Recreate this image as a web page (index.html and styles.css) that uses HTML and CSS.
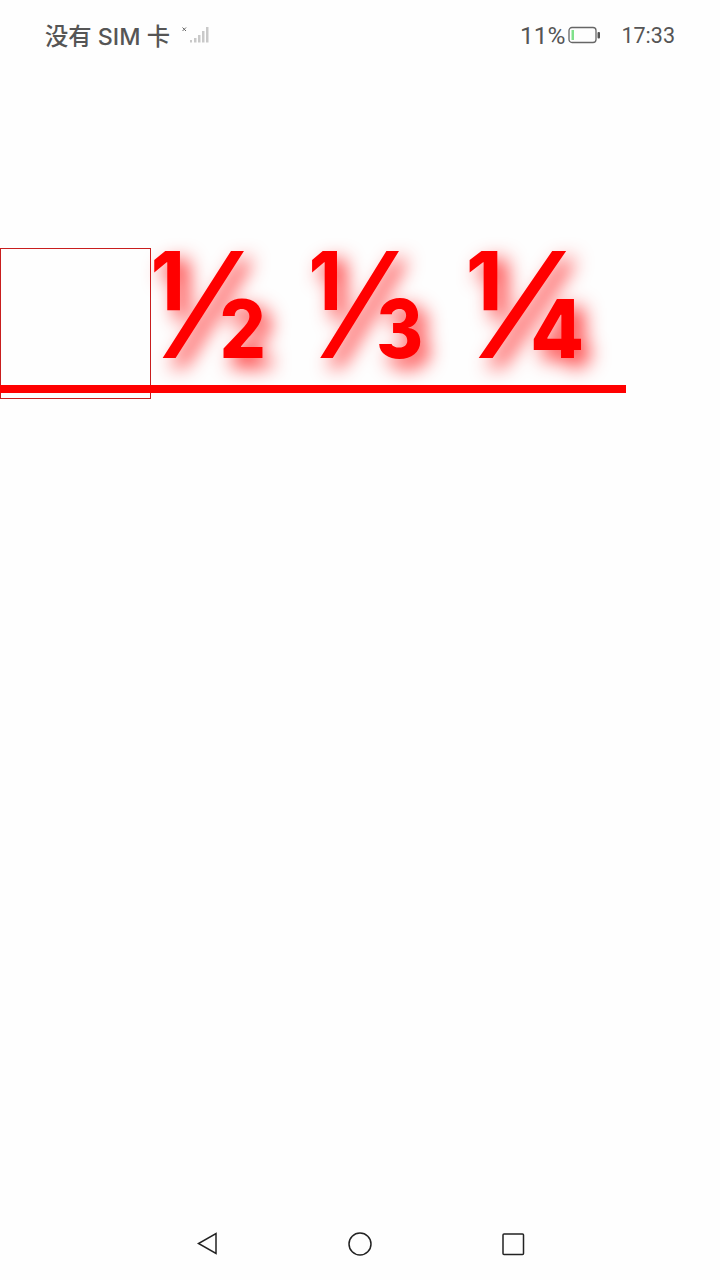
FILE: index.html
```html
<!DOCTYPE html>
<html lang="zh">
<head>
<meta charset="utf-8">
<title>Fractions</title>
<link rel="stylesheet" href="styles.css">
</head>
<body>
<div class="screen">
  <header class="status">
    <div class="status-left">
      <span class="carrier">没有 SIM 卡</span>
      <svg class="signal" width="28" height="20" viewBox="0 0 28 20">
        <path class="x" d="M0.500 2.500l3.500 3.500M4 2.500l-3.500 3.500"/>
        <g class="bars">
          <rect x="8" y="15" width="2" height="2.500"/>
          <rect x="12" y="13" width="2.500" height="4.500"/>
          <rect x="16" y="10" width="2.500" height="7.500"/>
          <rect x="20" y="6" width="2.500" height="11.500"/>
          <rect x="24" y="2" width="2.500" height="15.500"/>
        </g>
      </svg>
    </div>
    <div class="status-right">
      <span class="percent">11%</span>
      <svg class="battery" width="32" height="18" viewBox="0 0 32 18">
        <rect class="shell" x="1" y="1.500" width="27" height="15" rx="3"/>
        <rect class="charge" x="3.500" y="4" width="2.500" height="10"/>
        <rect class="cap" x="29.500" y="6" width="2.500" height="6.500" rx="1"/>
      </svg>
      <span class="clock">17:33</span>
    </div>
  </header>
  <main class="content">
    <div class="fractions">
      <div class="box"></div>
      <div class="glyphs">
        <span class="frac half">½</span>
        <span class="frac third">⅓</span>
        <span class="frac quarter">¼</span>
      </div>
    </div>
  </main>
  <nav class="nav">
    <svg width="24" height="26" viewBox="0 0 24 26"><path class="nav-icon" d="M21 2.500v20L3.500 12.500z"/></svg>
    <svg width="26" height="26" viewBox="0 0 26 26"><circle class="nav-icon" cx="13" cy="13" r="11"/></svg>
    <svg width="24" height="24" viewBox="0 0 24 24"><rect class="nav-icon" x="2" y="2" width="20.500" height="20.500" rx="1"/></svg>
  </nav>
</div>
</body>
</html>
```
FILE: styles.css
```css
* { box-sizing: border-box; }
html, body { margin: 0; padding: 0; }
body { background: #fefefe; }
.screen {
  width: 720px;
  height: 1280px;
  display: flex;
  flex-direction: column;
  overflow: hidden;
}
.status {
  height: 70px;
  flex: none;
  display: flex;
  justify-content: space-between;
  align-items: center;
  padding: 0 45px;
  color: #555;
  font-family: "Roboto", "Noto Sans CJK SC", sans-serif;
}
.status-left, .status-right { display: flex; align-items: center; }
.carrier {
  font-family: "Inter", "Noto Sans CJK SC", sans-serif;
  font-size: 23.300px;
  font-weight: 500;
}
.signal { margin-left: 12px; }
.x { stroke: #666; stroke-width: 1; fill: none; }
.bars { fill: #c9c9c9; }
.percent { font-size: 24.500px; }
.battery { margin-left: 3px; }
.shell { fill: none; stroke: #666; stroke-width: 1.300; }
.charge { fill: #7fe08a; }
.cap { fill: #555; }
.clock { font-size: 21.500px; margin-left: 21px; }
.content { flex: 1; padding-top: 178px; }
.fractions {
  position: relative;
  width: 626px;
  display: flex;
  align-items: flex-start;
  color: #f00;
}
.fractions::after {
  content: "";
  position: absolute;
  left: 0;
  right: 0;
  top: 137px;
  height: 8px;
  background: #f00;
}
.box {
  width: 151px;
  height: 151px;
  flex: none;
  border: 1px solid #c81e1e;
}
.glyphs {
  display: flex;
  margin-left: -2px;
  font-family: "Inter", "Roboto", sans-serif;
  font-size: 147px;
  font-weight: 600;
  line-height: 114px;
  white-space: nowrap;
  text-shadow: 9px 9px 20px rgba(255, 0, 0, 0.85);
}
.frac {
  width: 157.500px;
  flex: none;
  transform-origin: left top;
}
.half { transform: scaleX(0.93); }
.third { transform: scaleX(0.9); }
.quarter { transform: scaleX(1); }
.nav {
  height: 72px;
  flex: none;
  display: flex;
  justify-content: center;
  align-items: center;
  gap: 128px;
  padding-bottom: 1px;
}
.nav-icon { fill: none; stroke: #222; stroke-width: 1.500; }
```
